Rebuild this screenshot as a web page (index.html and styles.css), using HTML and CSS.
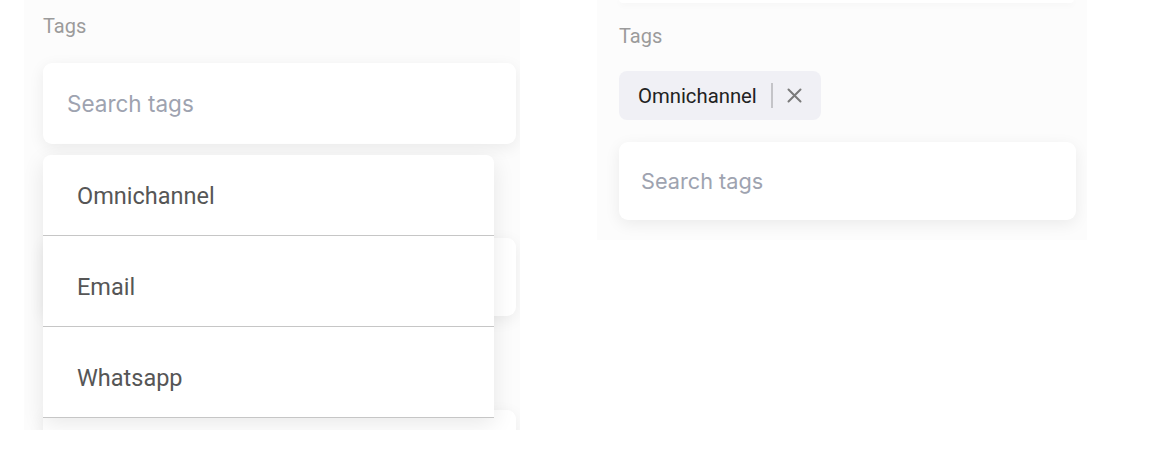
FILE: index.html
```html
<!DOCTYPE html>
<html lang="en">
<head>
<meta charset="utf-8">
<title>Tags</title>
<link rel="stylesheet" href="styles.css">
</head>
<body>
<div class="page">
  <section class="panel panel-left">
    <div class="label">Tags</div>
    <div class="search">Search tags</div>
    <div class="field"></div>
    <div class="field"></div>
    <ul class="dropdown">
      <li class="option">Omnichannel</li>
      <li class="option">Email</li>
      <li class="option">Whatsapp</li>
    </ul>
  </section>
  <section class="panel panel-right">
    <div class="card-edge"></div>
    <div class="label label-right">Tags</div>
    <div class="chips">
      <span class="chip">
        <span class="chip-text">Omnichannel</span>
        <span class="chip-sep"></span>
        <svg class="chip-x" width="15" height="15" viewBox="0 0 15 15"><path d="M1.5 1.5 L13.5 13.5 M13.5 1.5 L1.5 13.5" stroke="#7a7a7a" stroke-width="2" stroke-linecap="round" fill="none"/></svg>
      </span>
    </div>
    <div class="search search-right">Search tags</div>
  </section>
</div>
</body>
</html>
```
FILE: styles.css
```css
body {
  margin: 0;
  background: #ffffff;
  font-family: Roboto, "Liberation Sans", sans-serif;
}
.page {
  display: flex;
  align-items: flex-start;
  padding-left: 24px;
  gap: 77px;
}
.panel {
  position: relative;
  overflow: hidden;
  box-sizing: border-box;
  background: #fcfcfc;
}
.panel-left {
  width: 496px;
  height: 430px;
  padding: 14px 4px 0 19px;
}
.panel-right {
  width: 490px;
  height: 240px;
  padding: 0 11px 0 22px;
}
.label {
  font-size: 20px;
  line-height: 24px;
  color: #9b9b9b;
}
.search {
  margin-top: 25px;
  height: 81px;
  box-sizing: border-box;
  display: flex;
  align-items: center;
  padding-left: 24px;
  background: #ffffff;
  border-radius: 9px;
  box-shadow: 0 4px 16px rgba(0, 0, 0, 0.07);
  font-family: Inter, "Noto Sans", sans-serif;
  font-size: 22.5px;
  color: #9ea3b0;
}
.field {
  margin-top: 94px;
  height: 78px;
  background: #ffffff;
  border-radius: 9px;
  box-shadow: 0 4px 16px rgba(0, 0, 0, 0.07);
}
.dropdown {
  position: absolute;
  top: 155px;
  left: 19px;
  width: 451px;
  margin: 0;
  padding: 0;
  list-style: none;
  background: #ffffff;
  border-radius: 8px 8px 0 0;
  box-shadow: 0 6px 22px rgba(0, 0, 0, 0.09);
}
.option {
  padding: 39px 34px 27px;
  font-size: 23.5px;
  line-height: 24px;
  color: #565656;
  border-bottom: 1px solid #c6c6c6;
}
.option:first-child {
  padding-top: 29px;
}
.card-edge {
  height: 4px;
  margin-top: -1px;
  margin-right: 2px;
  background: #ffffff;
  border-radius: 0 0 12px 12px;
  box-shadow: 0 2px 6px rgba(0, 0, 0, 0.035);
}
.label-right {
  margin-top: 21px;
}
.chips {
  margin-top: 23px;
  display: flex;
}
.chip {
  display: inline-flex;
  align-items: center;
  height: 49px;
  padding: 0 19px;
  box-sizing: border-box;
  background: #f0f0f5;
  border-radius: 8px;
}
.chip-text {
  font-size: 20.3px;
  color: #222222;
}
.chip-sep {
  width: 2px;
  height: 25px;
  margin-left: 14px;
  background: #c4c4c8;
}
.chip-x {
  margin-left: 14px;
}
.search-right {
  margin-top: 22px;
  height: 78px;
  width: 457px;
  padding-left: 22px;
  font-size: 21.7px;
}
```
